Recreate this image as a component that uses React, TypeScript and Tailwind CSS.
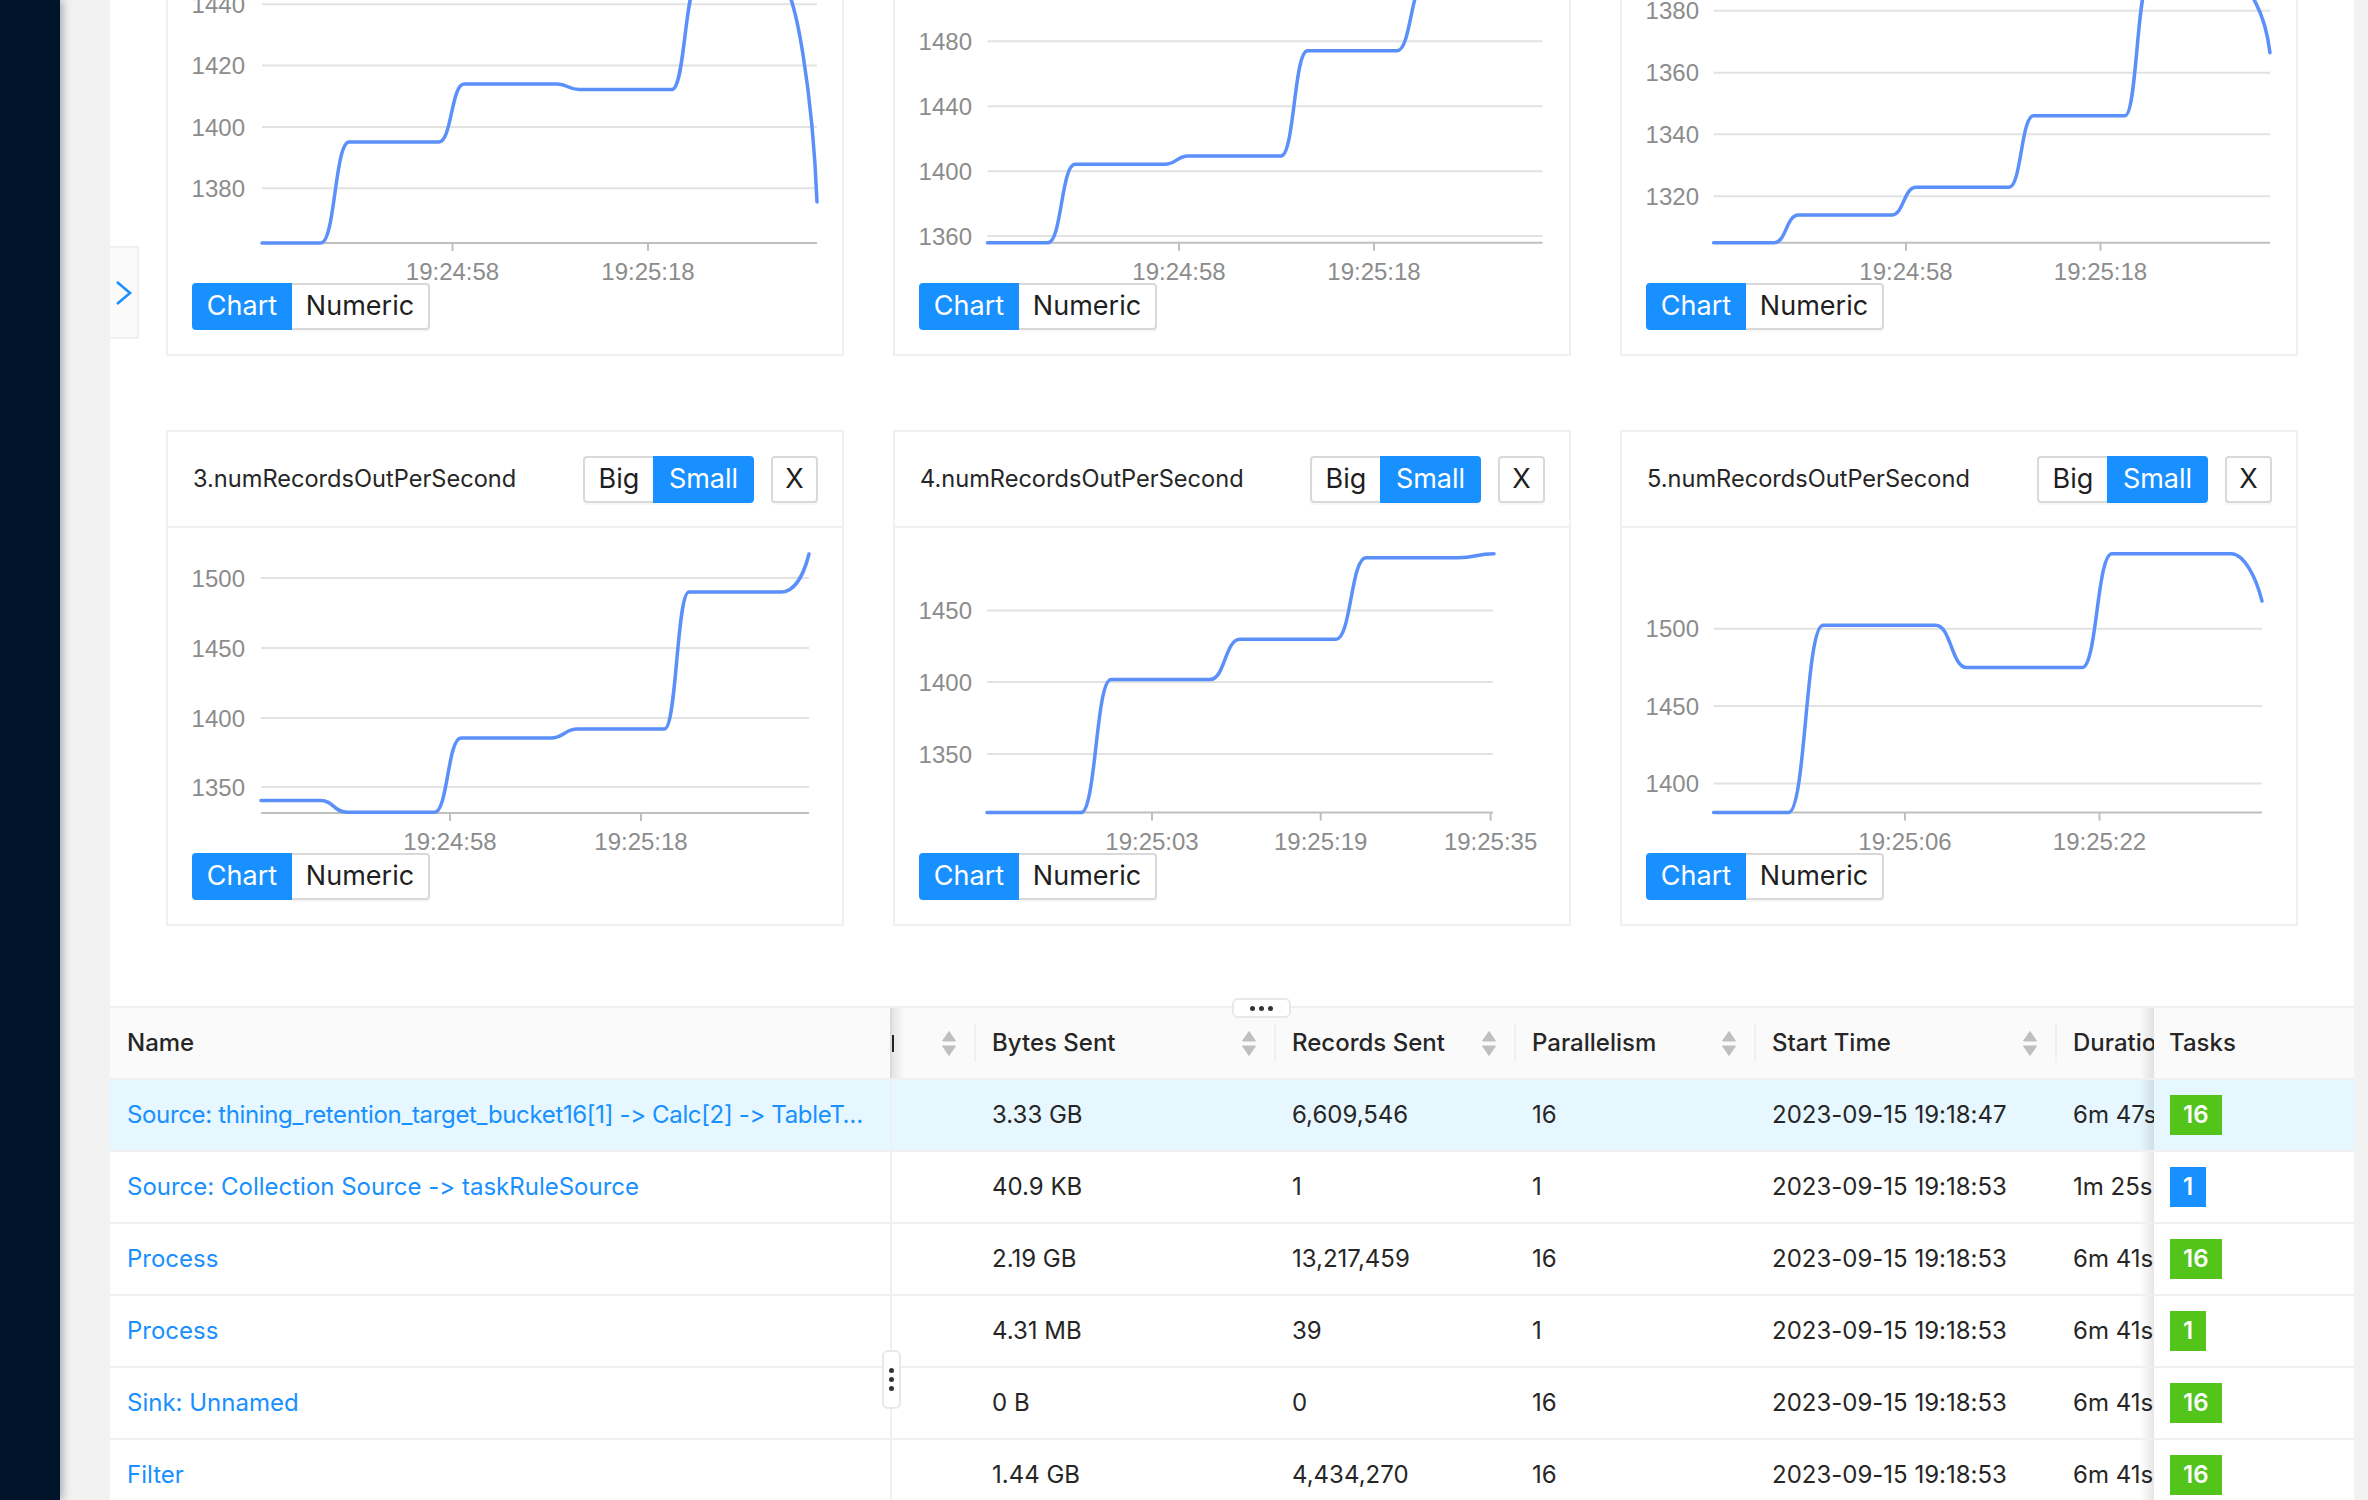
import React from 'react'

type Pt = [number, number]
type ChartDef = {
  title: string
  grid: [number, string][]
  x0: number
  x1: number
  base: number
  ticks: [number, string][]
  line: Pt[]
  tail?: string
}

// all chart coordinates are in card-inner pixels, measured off the screenshot
const charts: ChartDef[] = [
  {
    title: '0.numRecordsOutPerSecond',
    grid: [[22.3, '1440'], [83.6, '1420'], [145, '1400'], [206.3, '1380']],
    x0: 94, x1: 649, base: 261,
    ticks: [[284.5, '19:24:58'], [480, '19:25:18']],
    line: [[94, 261], [153, 261], [181, 160], [271, 160], [296, 102], [389, 102], [411, 107.5], [504, 107.5], [530, 0], [612, 0]],
    tail: 'C 628 0 645 120 649 220',
  },
  {
    title: '1.numRecordsOutPerSecond',
    grid: [[59.3, '1480'], [124.3, '1440'], [189.3, '1400'], [254, '1360']],
    x0: 92.5, x1: 647.5, base: 260.7,
    ticks: [[284, '19:24:58'], [479, '19:25:18']],
    line: [[92.5, 260.7], [153, 260.7], [180, 182.3], [269.5, 182.3], [293.5, 174], [386, 174], [412.5, 68.7], [502, 68.7], [530, 0], [647.5, 0]],
  },
  {
    title: '2.numRecordsOutPerSecond',
    grid: [[28.7, '1380'], [90.7, '1360'], [152.3, '1340'], [214.3, '1320']],
    x0: 91.6, x1: 648, base: 260.7,
    ticks: [[284, '19:24:58'], [478.5, '19:25:18']],
    line: [[91.6, 260.7], [152, 260.7], [176.5, 233], [269.5, 233], [294, 205.3], [387, 205.3], [411.5, 133.7], [503, 133.7], [527, 0], [612, 0]],
    tail: 'C 626 0 643 30 648 70.7',
  },
  {
    title: '3.numRecordsOutPerSecond',
    grid: [[26, '1500'], [96, '1450'], [166, '1400'], [235, '1350']],
    x0: 93, x1: 641, base: 261,
    ticks: [[282, '19:24:58'], [473, '19:25:18']],
    line: [[93, 248.5], [152.5, 248.5], [179, 260.3], [266.5, 260.3], [293, 186], [383, 186], [409.5, 177], [496.5, 177], [521, 40], [613, 40]],
    tail: 'C 627 40 636 22 641 2',
  },
  {
    title: '4.numRecordsOutPerSecond',
    grid: [[58.5, '1450'], [130, '1400'], [202, '1350']],
    x0: 92, x1: 598, base: 260.6,
    ticks: [[257, '19:25:03'], [425.7, '19:25:19'], [595.6, '19:25:35']],
    line: [[92, 260.6], [186, 260.6], [216, 127.5], [315, 127.5], [345, 87.3], [441, 87.3], [471, 5.8], [563, 5.8], [599, 1.7]],
  },
  {
    title: '5.numRecordsOutPerSecond',
    grid: [[76.7, '1500'], [154, '1450'], [231.6, '1400']],
    x0: 91.6, x1: 640, base: 260.6,
    ticks: [[283, '19:25:06'], [477.5, '19:25:22']],
    line: [[91.6, 260.6], [166.5, 260.6], [201, 73.3], [313.5, 73.3], [345, 115.6], [460, 115.6], [490, 1.7], [609, 1.7]],
    tail: 'C 622 1.7 634 25 640 49',
  },
]

function linePath(pts: Pt[], tail?: string) {
  let d = `M ${pts[0][0]} ${pts[0][1]}`
  for (let i = 1; i < pts.length; i++) {
    const [x0, y0] = pts[i - 1]
    const [x1, y1] = pts[i]
    if (y0 === y1) {
      d += ` L ${x1} ${y1}`
    } else {
      const dx = (x1 - x0) * 0.5
      d += ` C ${x0 + dx} ${y0} ${x1 - dx} ${y1} ${x1} ${y1}`
    }
  }
  if (tail) d += ' ' + tail
  return d
}

function MetricChart({ c }: { c: ChartDef }) {
  return (
    <svg width={674} height={301} viewBox="0 0 674 301" className="block overflow-visible" fontFamily="'Liberation Sans', Arial, sans-serif">
      {c.grid.map(([y, label]) => (
        <g key={label}>
          <line x1={c.x0} x2={c.x1} y1={y} y2={y} stroke="#e2e2e2" strokeWidth={2} />
          <text x={77} y={y} textAnchor="end" dominantBaseline="central" fontSize={24} fill="#8c8c8c">{label}</text>
        </g>
      ))}
      <line x1={c.x0} x2={c.x1} y1={c.base} y2={c.base} stroke="#bfbfbf" strokeWidth={2} />
      {c.ticks.map(([x, label]) => (
        <g key={label}>
          <line x1={x} x2={x} y1={c.base} y2={c.base + 8} stroke="#bfbfbf" strokeWidth={2} />
          <text x={x} y={289} textAnchor="middle" dominantBaseline="central" fontSize={24} fill="#8c8c8c">{label}</text>
        </g>
      ))}
      <path d={linePath(c.line, c.tail)} fill="none" stroke="#5b8ff9" strokeWidth={3.5} strokeLinecap="round" strokeLinejoin="round" />
    </svg>
  )
}

function MetricCard({ c }: { c: ChartDef }) {
  return (
    <div className="border-2 border-[#f0f0f0] bg-white">
      <div className="flex h-[96px] items-center justify-between border-b-2 border-[#f0f0f0] pl-[25px] pr-[24px]">
        <span className="text-[23.6px] text-[#262626]">{c.title}</span>
        <div className="flex items-center gap-[17px] text-[27px]">
          <div className="flex h-[47px] shadow-[0_2px_0_rgba(0,0,0,0.03)]">
            <span className="flex w-[70px] items-center justify-center rounded-l-[4px] border-2 border-r-0 border-[#d9d9d9] bg-white text-[#1f1f1f]">Big</span>
            <span className="flex w-[101px] items-center justify-center rounded-r-[4px] border-2 border-[#1890ff] bg-[#1890ff] text-white">Small</span>
          </div>
          <span className="flex h-[47px] w-[47px] items-center justify-center rounded-[4px] border-2 border-[#d9d9d9] bg-white text-[#1f1f1f] shadow-[0_2px_0_rgba(0,0,0,0.03)]">X</span>
        </div>
      </div>
      <div className="pb-[24px] pt-[24px]">
        <MetricChart c={c} />
        <div className="flex h-[47px] pl-[24px] text-[27px]">
          <span className="flex w-[100px] items-center justify-center rounded-l-[4px] border-2 border-[#1890ff] bg-[#1890ff] text-white">Chart</span>
          <span className="flex w-[138px] items-center justify-center rounded-r-[4px] border-2 border-l-0 border-[#d9d9d9] bg-white text-[#1f1f1f] shadow-[0_2px_0_rgba(0,0,0,0.03)]">Numeric</span>
        </div>
      </div>
    </div>
  )
}

function Sorter() {
  return (
    <span className="flex w-[16px] shrink-0 justify-center">
      <svg width="14" height="25" viewBox="0 0 14 25">
        <path d="M7 0.5 L13.5 10 L0.5 10 Z" fill="#bfbfbf" strokeLinejoin="round" stroke="#bfbfbf" strokeWidth="1" />
        <path d="M0.5 15 L13.5 15 L7 24.5 Z" fill="#bfbfbf" strokeLinejoin="round" stroke="#bfbfbf" strokeWidth="1" />
      </svg>
    </span>
  )
}

function HeadCell({ title, width }: { title: string; width: string }) {
  return (
    <div className={`flex h-full shrink-0 items-center pl-[16px] ${width}`}>
      <span className="flex-1 whitespace-nowrap">{title}</span>
      <Sorter />
      <span className="ml-[17px] h-[38px] w-[2px] bg-[#f0f0f0]" />
    </div>
  )
}

type Row = {
  name: string
  bytes: string
  records: string
  par: string
  start: string
  dur: string
  tasks: string
  blue?: boolean
  active?: boolean
}

const rows: Row[] = [
  { name: 'Source: thining_retention_target_bucket16[1] -> Calc[2] -> TableT…', bytes: '3.33 GB', records: '6,609,546', par: '16', start: '2023-09-15 19:18:47', dur: '6m 47s', tasks: '16', active: true },
  { name: 'Source: Collection Source -> taskRuleSource', bytes: '40.9 KB', records: '1', par: '1', start: '2023-09-15 19:18:53', dur: '1m 25s', tasks: '1', blue: true },
  { name: 'Process', bytes: '2.19 GB', records: '13,217,459', par: '16', start: '2023-09-15 19:18:53', dur: '6m 41s', tasks: '16' },
  { name: 'Process', bytes: '4.31 MB', records: '39', par: '1', start: '2023-09-15 19:18:53', dur: '6m 41s', tasks: '1' },
  { name: 'Sink: Unnamed', bytes: '0 B', records: '0', par: '16', start: '2023-09-15 19:18:53', dur: '6m 41s', tasks: '16' },
  { name: 'Filter', bytes: '1.44 GB', records: '4,434,270', par: '16', start: '2023-09-15 19:18:53', dur: '6m 41s', tasks: '16' },
]

function VertexTable() {
  return (
    <div className="mt-[80px] border-t-2 border-[#f0f0f0] text-[24px] text-[#262626]">
      <div className="flex h-[72px] border-b-2 border-[#f0f0f0] bg-[#fafafa] font-medium">
        <div className="relative flex w-[782px] shrink-0 items-center border-r-2 border-[#f0f0f0] pl-[17px]">
          Name
          <div className="absolute left-full top-0 h-full w-[15px] bg-linear-to-r from-black/10 to-transparent" />
        </div>
        <div className="flex min-w-0 flex-1 overflow-hidden">
          <div className="flex h-full w-[84px] shrink-0 items-center">
            <span className="h-[17px] w-[2px] bg-[#262626]" />
            <span className="flex-1" />
            <Sorter />
            <span className="ml-[17px] h-[38px] w-[2px] bg-[#f0f0f0]" />
          </div>
          <HeadCell title="Bytes Sent" width="w-[300px]" />
          <HeadCell title="Records Sent" width="w-[240px]" />
          <HeadCell title="Parallelism" width="w-[240px]" />
          <HeadCell title="Start Time" width="w-[301px]" />
          <div className="flex h-full w-[200px] shrink-0 items-center whitespace-nowrap pl-[16px]">Duration</div>
        </div>
        <div className="relative flex w-[200px] shrink-0 items-center pl-[15px]">
          <div className="absolute right-full top-0 h-full w-[14px] bg-linear-to-l from-black/10 to-transparent" />
          Tasks
        </div>
      </div>
      {rows.map((r, i) => (
        <div key={i} className={`flex h-[72px] border-b-2 border-[#f0f0f0] ${r.active ? 'bg-[#e6f7ff]' : 'bg-white'}`}>
          <div className="flex w-[782px] shrink-0 items-center overflow-hidden border-r-2 border-[#f0f0f0] px-[17px] text-[#1890ff]">
            <span className={`truncate ${r.active ? 'tracking-[-0.35px]' : ''}`}>{r.name}</span>
          </div>
          <div className="flex min-w-0 flex-1 overflow-hidden whitespace-nowrap">
            <div className="w-[84px] shrink-0" />
            <div className="flex w-[300px] shrink-0 items-center pl-[16px]">{r.bytes}</div>
            <div className="flex w-[240px] shrink-0 items-center pl-[16px]">{r.records}</div>
            <div className="flex w-[240px] shrink-0 items-center pl-[16px]">{r.par}</div>
            <div className="flex w-[301px] shrink-0 items-center pl-[16px]">{r.start}</div>
            <div className="flex w-[200px] shrink-0 items-center pl-[16px]">{r.dur}</div>
          </div>
          <div className="relative flex w-[200px] shrink-0 items-center pl-[16px]">
            <div className="absolute right-full top-0 h-full w-[14px] bg-linear-to-l from-black/10 to-transparent" />
            <span className={`flex h-[40px] items-center px-[13px] font-semibold text-white ${r.blue ? 'bg-[#1890ff]' : 'bg-[#52c41a]'}`}>{r.tasks}</span>
          </div>
        </div>
      ))}
    </div>
  )
}

export default function App() {
  return (
    <div className="flex h-[1500px] w-[2368px] overflow-hidden bg-[#f2f2f2] font-['Inter',sans-serif] [font-variant-ligatures:none]">
      <aside className="relative z-10 w-[60px] shrink-0 bg-[#001529] shadow-[3px_0_8px_rgba(0,21,41,0.3)]" />
      <main className="relative ml-[50px] w-[2244px] shrink-0 overflow-hidden bg-white">
        <div className="-mt-[140px] grid grid-cols-3 gap-x-[49px] gap-y-[74px] px-[56px]">
          {charts.map(c => <MetricCard key={c.title} c={c} />)}
        </div>

        <VertexTable />

        {/* collapse tab on the left edge */}
        <div className="absolute left-0 top-[246px] flex h-[93px] w-[29px] items-center border-2 border-l-0 border-[#f0f0f0] bg-[#fafafa]">
          <svg width="27" height="89" viewBox="0 0 27 89" className="block">
            <polyline points="7,34 20,45 7,56" fill="none" stroke="#1890ff" strokeWidth="2.6" strokeLinejoin="miter" />
          </svg>
        </div>

        {/* splitter handles */}
        <div className="absolute left-[1122px] top-[998px] flex h-[20px] w-[59px] items-center justify-center gap-[4px] rounded-[6px] border-2 border-[#e8e8e8] bg-white">
          <span className="h-[5px] w-[5px] rounded-full bg-[#333]" />
          <span className="h-[5px] w-[5px] rounded-full bg-[#333]" />
          <span className="h-[5px] w-[5px] rounded-full bg-[#333]" />
        </div>
        <div className="absolute left-[772px] top-[1350px] flex h-[59px] w-[19px] flex-col items-center justify-center gap-[4px] rounded-[6px] border-2 border-[#e8e8e8] bg-white">
          <span className="h-[5px] w-[5px] rounded-full bg-[#333]" />
          <span className="h-[5px] w-[5px] rounded-full bg-[#333]" />
          <span className="h-[5px] w-[5px] rounded-full bg-[#333]" />
        </div>
      </main>
    </div>
  )
}
